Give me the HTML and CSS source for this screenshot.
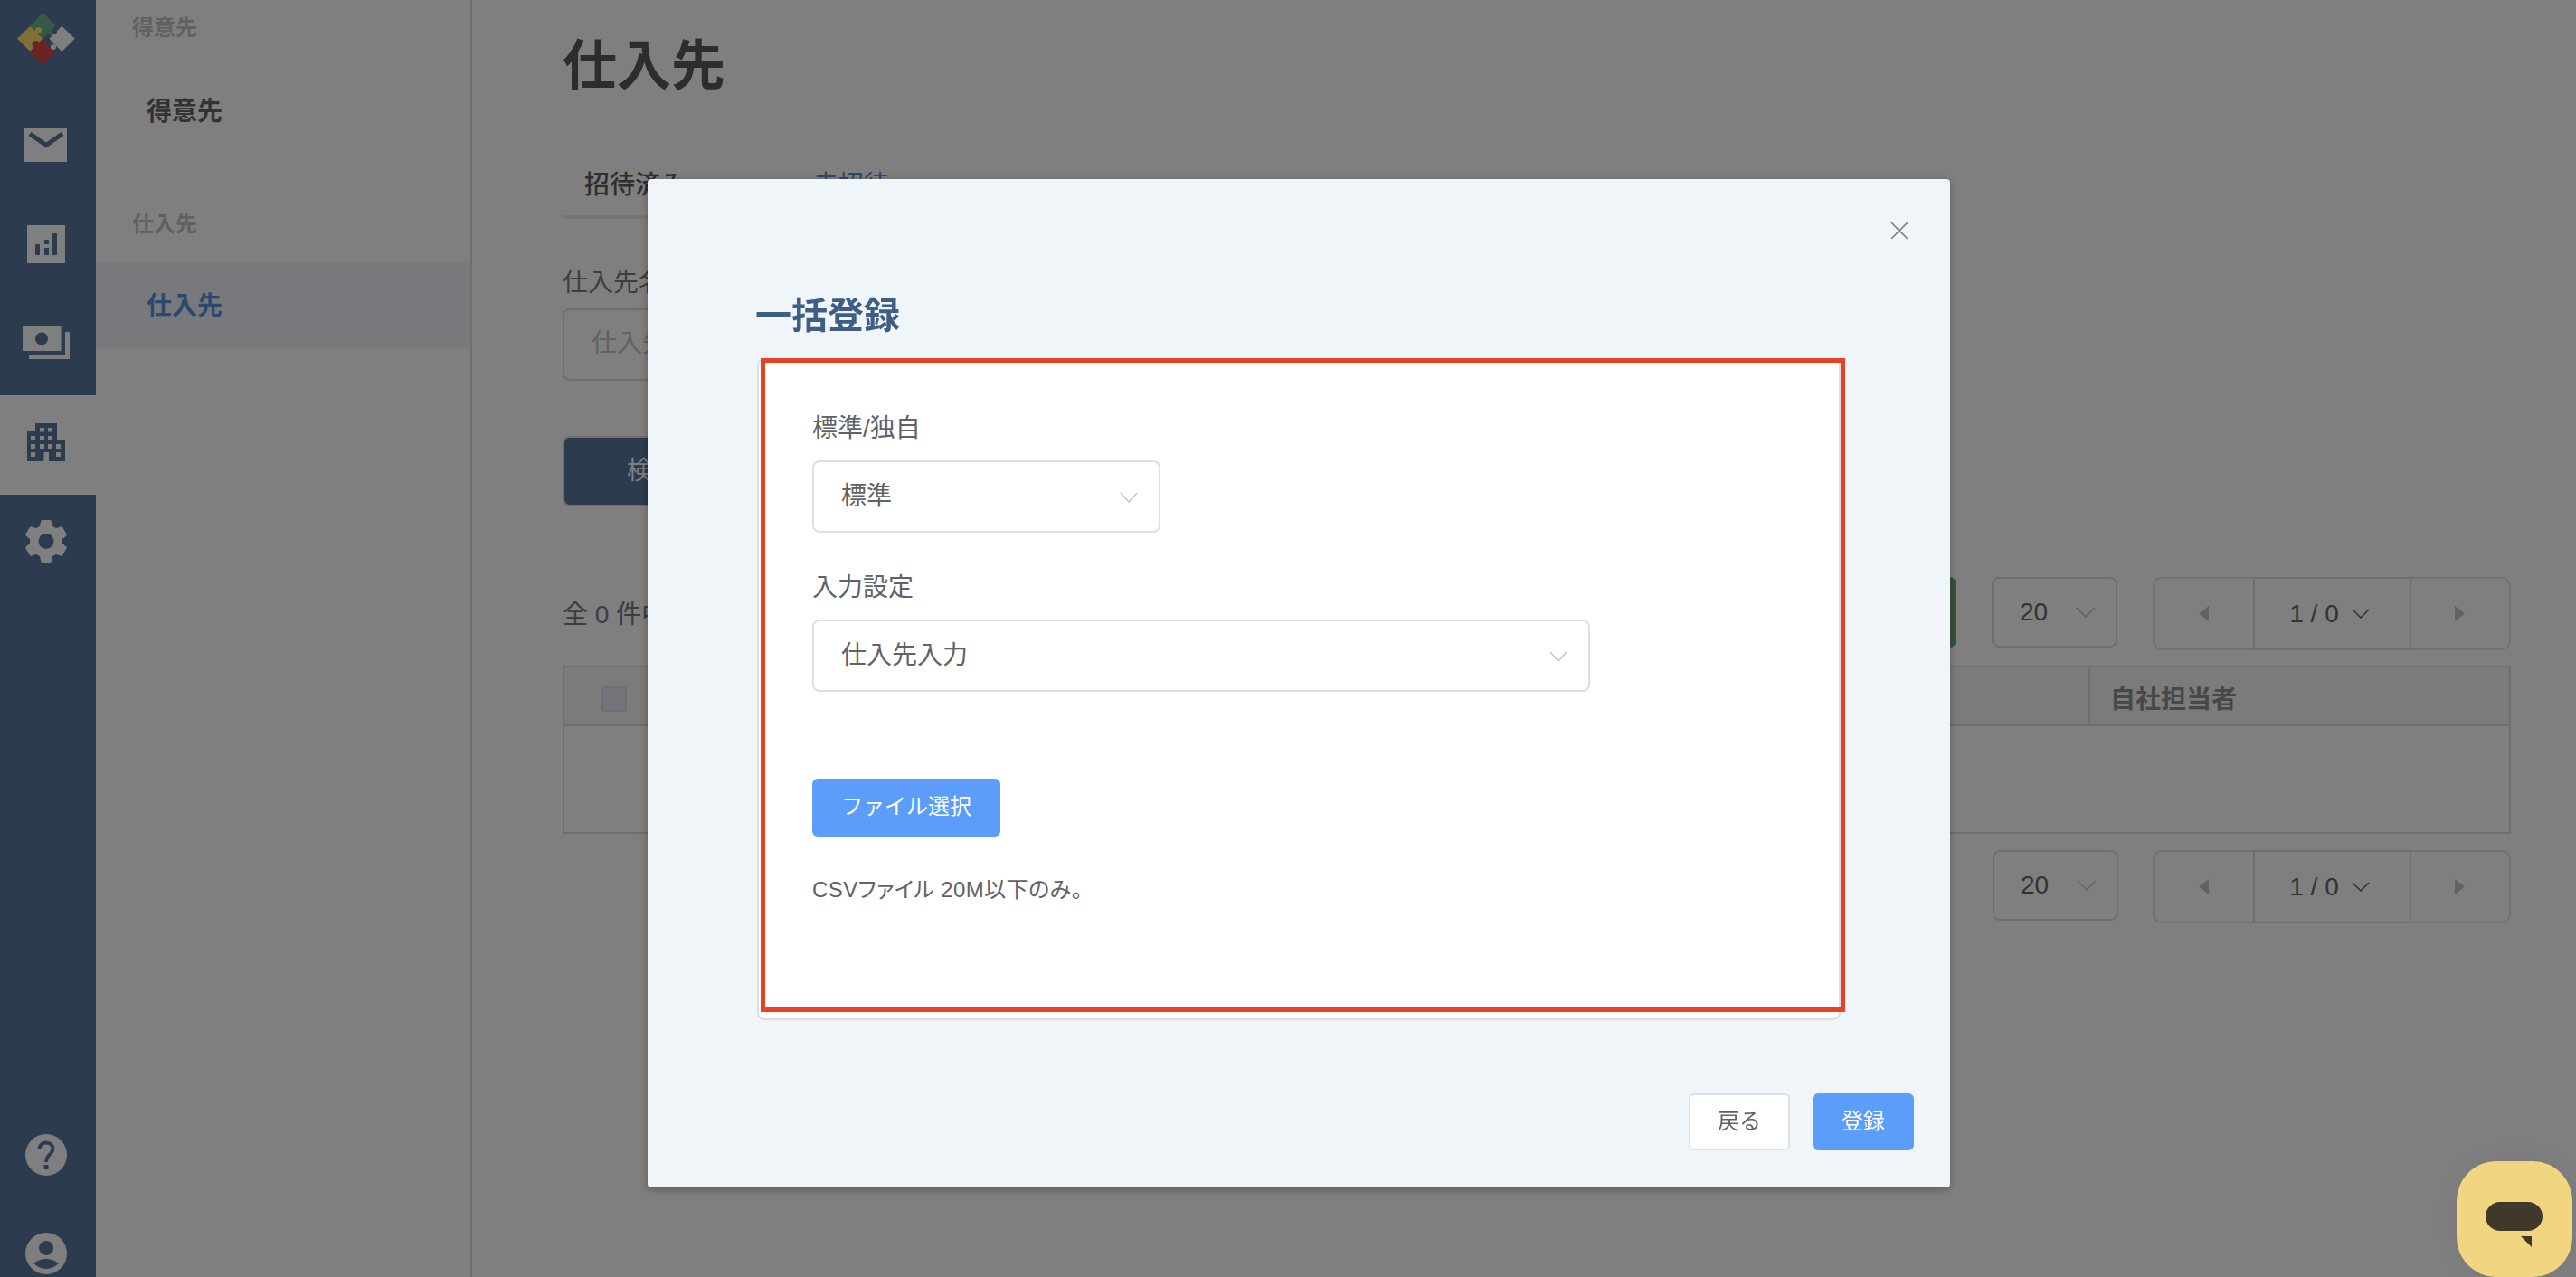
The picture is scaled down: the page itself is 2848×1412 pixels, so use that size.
FILE: index.html
```html
<!DOCTYPE html>
<html lang="ja">
<head>
<meta charset="utf-8">
<title>仕入先</title>
<link rel="stylesheet" href="styles.css">
</head>
<body>
<div class="app">
  <nav class="rail">
    <svg class="rail-cell" width="106" height="105" viewBox="0 0 106 105">
      <path class="logo-green" d="M47.3 14 61.7 28.3 55 35 47.3 42.7 33.3 28.3z"/>
      <circle class="logo-green" cx="57" cy="36" r="3.6"/>
      <path class="logo-gold" d="M33.3 28.7 47.3 42.7 33.3 56.7 19 42.7z"/>
      <circle class="logo-gold" cx="42.5" cy="33.5" r="3.6"/>
      <path class="logo-red" d="M47.3 42.7 61.7 57 47.7 71.7 33.3 57z"/>
      <circle class="logo-red" cx="39.5" cy="49" r="4"/>
      <path class="logo-grey" d="M68.3 28.7 82.7 42.7 68.3 57 54.3 42.7z"/>
      <circle class="icon-cut" cx="54.5" cy="49" r="3.2"/>
      <circle class="logo-grey" cx="59" cy="52" r="3"/>
      <circle class="icon-cut" cx="60.5" cy="35.5" r="2.6"/>
    </svg>
    <svg class="rail-cell" width="106" height="110" viewBox="0 105 106 110">
      <rect class="icon-fill" x="27" y="141" width="47" height="38"/>
      <path class="icon-line" d="M33 148 51 160.500 69 148"/>
    </svg>
    <svg class="rail-cell" width="106" height="110" viewBox="0 215 106 110">
      <rect class="icon-fill" x="30" y="249" width="42" height="42"/>
      <path class="icon-cut" d="M39 270h5v12h-5zM49 265h5v5h-5zM49 274h5v8h-5zM58 258h5v24h-5z"/>
    </svg>
    <svg class="rail-cell" width="106" height="112" viewBox="0 325 106 112">
      <rect class="icon-fill" x="25" y="360" width="42.500" height="28"/>
      <circle class="icon-cut" cx="46" cy="374.500" r="7"/>
      <path class="icon-fill" d="M72 367h5v30H32v-5h40z"/>
    </svg>
    <div class="rail-active">
      <svg width="106" height="110" viewBox="0 437 106 110">
        <path class="icon-cut" d="M39 468h24v19h9v23H54v-10h-5.500v10H30v-33h9z"/>
        <path class="icon-fill" d="M44 473h5v4.500h-5zM53 473h5v4.500h-5zM34 482h5v5h-5zM44 482h5v5h-5zM53 482h5v5h-5zM34 491h5v5h-5zM44 491h5v5h-5zM53 491h5v5h-5zM62 491h5v5h-5zM34 500h5v5h-5zM62 500h5v5h-5z"/>
      </svg>
    </div>
    <svg class="rail-cell" width="106" height="110" viewBox="0 547 106 110">
      <g class="icon-fill">
        <circle cx="51" cy="598.500" r="18"/>
        <path d="M45 577q0-2 2-2h8q2 0 2 2l1.500 8h-15z"/>
        <path d="M45 577q0-2 2-2h8q2 0 2 2l1.500 8h-15z" transform="rotate(60 51 598.500)"/>
        <path d="M45 577q0-2 2-2h8q2 0 2 2l1.500 8h-15z" transform="rotate(120 51 598.500)"/>
        <path d="M45 577q0-2 2-2h8q2 0 2 2l1.500 8h-15z" transform="rotate(180 51 598.500)"/>
        <path d="M45 577q0-2 2-2h8q2 0 2 2l1.500 8h-15z" transform="rotate(240 51 598.500)"/>
        <path d="M45 577q0-2 2-2h8q2 0 2 2l1.500 8h-15z" transform="rotate(300 51 598.500)"/>
      </g>
      <circle class="icon-cut" cx="51" cy="598.500" r="8.500"/>
    </svg>
    <div class="rail-bottom">
      <svg class="rail-cell" width="106" height="110" viewBox="0 1222 106 110">
        <circle class="icon-fill" cx="51" cy="1277" r="23"/>
        <path class="icon-line icon-line-q" d="M43.500 1271C43.500 1266 47 1263.500 51 1263.500 55.500 1263.500 58.500 1266.500 58.500 1270.500 58.500 1276 51 1276.500 51 1285"/>
        <rect class="icon-cut" x="48.500" y="1288" width="5" height="5"/>
      </svg>
      <svg class="rail-cell" width="106" height="80" viewBox="0 1332 106 80">
        <circle class="icon-fill" cx="51" cy="1386" r="23"/>
        <circle class="icon-cut" cx="51" cy="1380" r="8"/>
        <path class="icon-cut" d="M37 1397Q51 1387 65 1397 51 1409 37 1397z"/>
      </svg>
    </div>
  </nav>

  <aside class="subnav">
    <div class="subnav-head">得意先</div>
    <div class="subnav-item">得意先</div>
    <div class="subnav-head subnav-head-second">仕入先</div>
    <div class="subnav-item subnav-item-active">仕入先</div>
  </aside>

  <main class="main">
    <h1 class="page-title">仕入先</h1>
    <div class="tabs">
      <div class="tab tab-on">招待済み</div>
      <div class="tab tab-off">未招待</div>
    </div>
    <div class="field-label">仕入先名</div>
    <div class="text-input">仕入先名</div>
    <div class="search-btn">検索</div>

    <div class="toolbar">
      <div class="count">全 0 件中</div>
      <div class="green-btn"></div>
      <div class="size-select">
        <span>20</span>
        <svg width="22" height="12" viewBox="0 0 22 12"><path class="chev-dim" d="M1 1 11 11 21 1"/></svg>
      </div>
      <div class="pager">
        <div class="pager-side"><svg width="11" height="17" viewBox="0 0 11 17"><path class="tri" d="M11 0V17L0 8.500z"/></svg></div>
        <div class="pager-mid">
          <span>1 / 0</span>
          <svg width="20" height="11" viewBox="0 0 20 11"><path class="chev-dark" d="M1 1 10 10 19 1"/></svg>
        </div>
        <div class="pager-side"><svg width="11" height="17" viewBox="0 0 11 17"><path class="tri" d="M0 0V17L11 8.500z"/></svg></div>
      </div>
    </div>

    <div class="table">
      <div class="thead">
        <div class="th-check"><span class="checkbox"></span></div>
        <div class="th-mid">仕入先</div>
        <div class="th-last">自社担当者</div>
      </div>
      <div class="tbody"></div>
    </div>

    <div class="toolbar toolbar-bottom">
      <div class="size-select">
        <span>20</span>
        <svg width="22" height="12" viewBox="0 0 22 12"><path class="chev-dim" d="M1 1 11 11 21 1"/></svg>
      </div>
      <div class="pager">
        <div class="pager-side"><svg width="11" height="17" viewBox="0 0 11 17"><path class="tri" d="M11 0V17L0 8.500z"/></svg></div>
        <div class="pager-mid">
          <span>1 / 0</span>
          <svg width="20" height="11" viewBox="0 0 20 11"><path class="chev-dark" d="M1 1 10 10 19 1"/></svg>
        </div>
        <div class="pager-side"><svg width="11" height="17" viewBox="0 0 11 17"><path class="tri" d="M0 0V17L11 8.500z"/></svg></div>
      </div>
    </div>
  </main>
</div>

<div class="overlay"></div>

<section class="modal">
  <svg class="modal-close" width="20" height="20" viewBox="0 0 20 20"><path d="M1 1 19 19M19 1 1 19"/></svg>
  <div class="modal-body">
    <h2 class="modal-title">一括登録</h2>
    <div class="card">
      <div class="form-label">標準/独自</div>
      <div class="select select-short">
        <span>標準</span>
        <svg width="20" height="12" viewBox="0 0 20 12"><path class="chev-light" d="M1 1 10 11 19 1"/></svg>
      </div>
      <div class="form-label form-label-next">入力設定</div>
      <div class="select select-long">
        <span>仕入先入力</span>
        <svg width="20" height="12" viewBox="0 0 20 12"><path class="chev-light" d="M1 1 10 11 19 1"/></svg>
      </div>
      <div class="file-btn">ファイル選択</div>
      <div class="note">CSVファイル 20M以下のみ。</div>
      <div class="highlight"></div>
    </div>
  </div>
  <div class="modal-footer">
    <div class="btn btn-back">戻る</div>
    <div class="btn btn-primary">登録</div>
  </div>
</section>

<div class="chat">
  <svg width="128" height="128" viewBox="0 0 128 128">
    <rect class="chat-mark" x="32" y="45" width="63" height="32" rx="16"/>
    <path class="chat-mark" d="M71 83H83V95z"/>
  </svg>
</div>
</body>
</html>
```
FILE: styles.css
```css
* { box-sizing: border-box; }
html, body { margin: 0; height: 100%; }
body {
  font-family: "Liberation Sans", "Noto Sans CJK JP", sans-serif;
  font-size: 28px;
  color: #7a7a7c;
  background: #fff;
  overflow: hidden;
}
.app { display: flex; height: 1412px; overflow: hidden; }

/* icon rail */
.rail { width: 106px; flex: none; height: 1412px; background: #5a769e; display: flex; flex-direction: column; }
.rail svg { display: block; flex: none; }
.rail-active { background: #fff; height: 110px; }
.rail-bottom { margin-top: auto; }
.icon-fill { fill: #fff; }
.icon-cut { fill: #5a769e; }
.icon-line { fill: none; stroke: #5a769e; stroke-width: 5; }
.icon-line-q { stroke-width: 3.8; }
.logo-green { fill: #66b488; }
.logo-gold { fill: #fddc70; }
.logo-red { fill: #dc4448; }
.logo-grey { fill: #fff; }

/* secondary nav */
.subnav { width: 416px; flex: none; border-right: 2px solid #dcdcdc; }
.subnav-head { padding: 15px 0 0 40px; line-height: 32px; font-size: 24px; font-weight: 700; color: #c2c2c4; }
.subnav-head-second { padding-top: 0; margin-top: 61px; }
.subnav-item { height: 95px; line-height: 95px; padding-left: 56px; font-weight: 700; color: #666; margin-top: 29px; }
.subnav-item-active { margin-top: 26px; line-height: 98px; background: #f0f3f8; color: #5a90e0; }

/* main behind modal */
.main { flex: 1; min-width: 0; padding: 44px 72px 0 100px; }
.page-title { margin: 0; font-size: 60px; line-height: 60px; font-weight: 700; color: #5a5a5a; }
.tabs { display: flex; margin-top: 67px; }
.tab { height: 71px; line-height: 68px; padding: 0 24px; width: 160px; }
.tab-on { color: #5c5c5c; font-weight: 500; border-bottom: 4px solid #ececec; }
.tab-off { margin-left: 93px; width: auto; color: #5a90e0; }
.field-label { margin-top: 50px; line-height: 42px; height: 40px; }
.text-input { margin-top: 9px; height: 80px; width: 400px; line-height: 74px; padding-left: 30px; border: 2px solid #dcdcdc; border-radius: 8px; color: #c0c4cc; }
.search-btn { margin-top: 61px; width: 198px; height: 78px; line-height: 74px; text-align: center; background: #5a769e; border: 2px solid #dcdcdc; border-radius: 8px; color: #fff; }

.toolbar { margin-top: 78px; height: 78px; display: flex; align-items: flex-start; }
.count { line-height: 84px; margin-right: auto; }
.green-btn { width: 200px; height: 78px; border-radius: 8px; background: #6ea476; margin-right: 39px; }
.size-select { width: 139px; height: 78px; padding: 0 22px 0 29px; border: 2px solid #dcdcdc; border-radius: 8px; display: flex; align-items: center; justify-content: space-between; color: #666; }
.pager { margin-left: 39px; width: 396px; height: 81px; display: flex; border: 2px solid #e4e4e6; border-radius: 10px; color: #666; }
.pager-side { flex: 1; display: flex; align-items: center; justify-content: center; }
.pager-mid { width: 175px; flex: none; padding-right: 5px; display: flex; align-items: center; justify-content: center; gap: 14px; border: 2px solid #dcdcdc; margin-top: -2px; margin-bottom: -2px; }
.tri { fill: #c0c4cc; }
.chev-dim { fill: none; stroke: #c0c4cc; stroke-width: 1.5; }
.chev-dark { fill: none; stroke: #666; stroke-width: 1.5; }
.chev-light { fill: none; stroke: #c0c4cc; stroke-width: 1.5; }

.table { margin-top: 20px; border: 2px solid #dcdcdc; height: 186px; }
.thead { display: flex; height: 65px; background: #f6f6f6; border-bottom: 2px solid #dcdcdc; font-weight: 700; color: #909090; align-items: stretch; }
.th-check { width: 110px; flex: none; display: flex; align-items: center; justify-content: center; padding-top: 6px; }
.checkbox { width: 28px; height: 28px; border: 2px solid #dcdfe6; border-radius: 4px; background: #e6ebf4; }
.th-mid { flex: 1; padding-left: 24px; line-height: 60px; }
.th-last { width: 465px; flex: none; padding-left: 22px; line-height: 72px; border-left: 2px solid #dcdcdc; }
.tbody { height: 117px; background: #fff; }
.toolbar-bottom { margin-top: 18px; justify-content: flex-end; }
.toolbar-bottom .pager { margin-left: 38px; }

/* overlay + modal */
.overlay { position: fixed; inset: 0; background: rgba(0, 0, 0, .5); }
.modal { position: fixed; left: 716px; top: 198px; width: 1440px; height: 1115px; padding: 122px 40px 0; background: #f0f5fa; border-radius: 4px; box-shadow: 0 2px 10px rgba(0, 0, 0, .3); color: #606266; }
.modal-close { position: absolute; right: 46px; top: 47px; }
.modal-close path { fill: none; stroke: #7d8087; stroke-width: 1.7; }
.modal-body { margin: 0 81px; }
.modal-title { margin: 0 0 0 -2px; height: 56px; font-size: 40px; line-height: 58px; font-weight: 700; color: #3f5e84; }
.card { position: relative; margin-top: 20px; height: 732px; padding: 56px 59px 0; background: #fff; border: 2px solid #dcdfe6; border-radius: 8px; }
.form-label { line-height: 40px; }
.form-label-next { margin-top: 41px; }
.select { margin-top: 15px; height: 80px; padding: 0 23px 6px 30px; background: #fff; border: 2px solid #dcdfe6; border-radius: 8px; display: flex; align-items: center; justify-content: space-between; }
.select svg { margin-top: 8px; }
.select-short { width: 385px; }
.select-long { width: 860px; }
.file-btn { margin-top: 96px; width: 208px; height: 64px; line-height: 62px; text-align: center; background: #5c9dfb; border-radius: 6px; color: #fff; font-size: 24px; }
.note { margin-top: 39px; line-height: 40px; font-size: 24px; font-feature-settings: "palt"; letter-spacing: .4px; }
.highlight { position: absolute; left: 2px; top: -2px; width: 1199px; height: 723px; border: 5px solid #ea4024; }
.modal-footer { margin-top: 81px; display: flex; justify-content: flex-end; gap: 25px; }
.btn { height: 63px; line-height: 62px; text-align: center; font-size: 24px; border-radius: 6px; }
.btn-back { width: 112px; line-height: 58px; background: #fff; border: 2px solid #dcdfe6; }
.btn-primary { width: 112px; background: #5c9dfb; color: #fff; }

/* chat launcher */
.chat { position: fixed; right: 4px; bottom: 0; width: 128px; height: 128px; border-radius: 44px; background: #f2d580; box-shadow: 0 0 30px rgba(0, 0, 0, .06); }
.chat svg { display: block; }
.chat-mark { fill: #40382a; }
```
